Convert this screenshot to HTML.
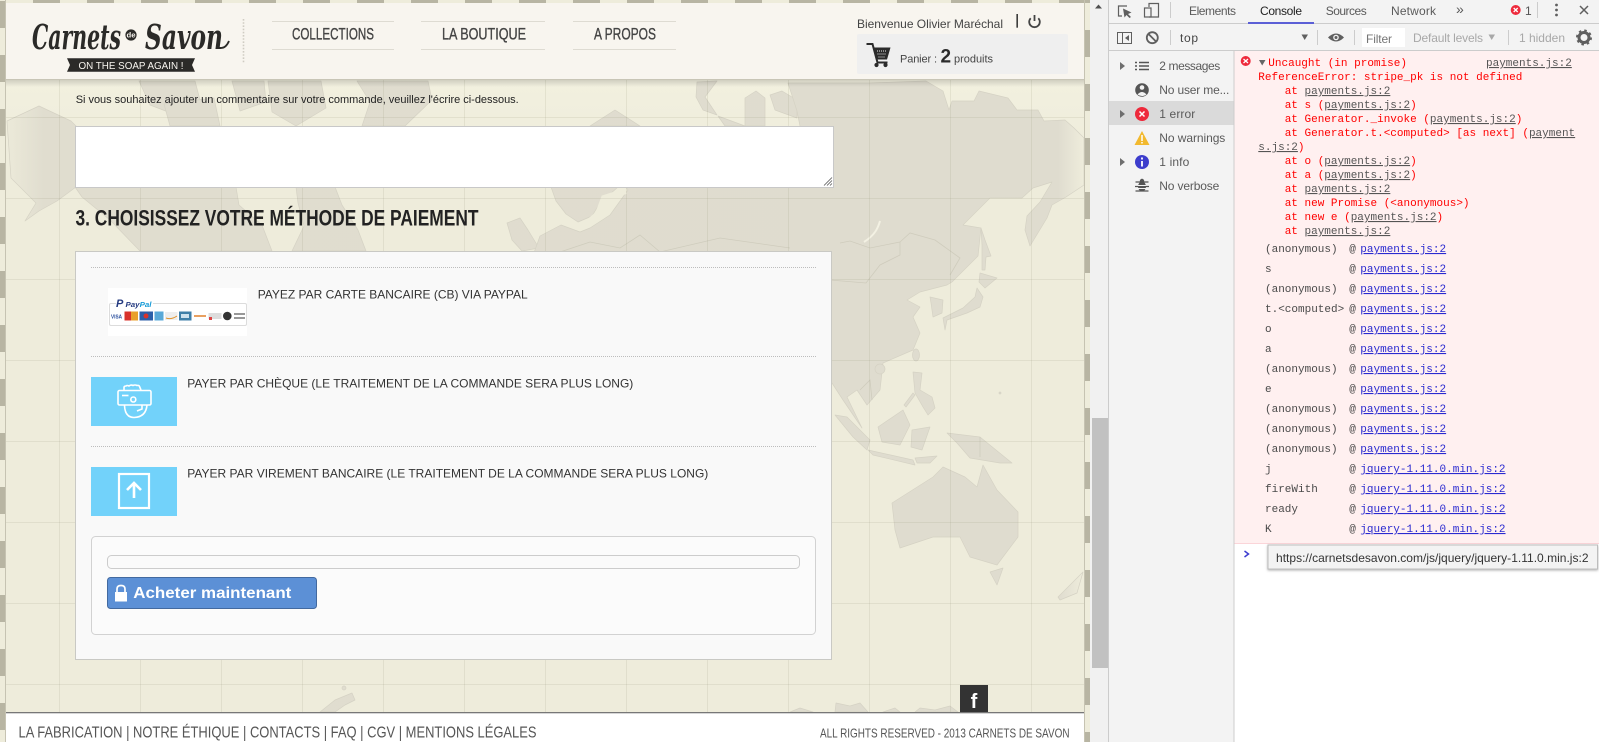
<!DOCTYPE html>
<html lang="fr"><head><meta charset="utf-8"><title>Carnets de Savon</title>
<style>
html,body{margin:0;padding:0;width:1599px;height:742px;overflow:hidden;background:#fff}
svg{display:block;position:absolute;left:0;top:0}
.s{font-family:"Liberation Sans",Arial,sans-serif}
.n{font-family:"Liberation Sans Narrow","Liberation Sans",sans-serif}
.m{font-family:"Liberation Mono",monospace;font-size:11px;white-space:pre}
.r{fill:#f00}
.u{text-decoration:underline;fill:#555}
.l{text-decoration:underline;fill:#2a2ad0}
.g{fill:#4a4a4a}
.t{font-family:"Liberation Sans",sans-serif;font-size:12px;fill:#5a5a5a}
.land{fill:url(#landfill);stroke:#d5d2c4;stroke-width:.7;stroke-linejoin:round}
</style></head><body>
<svg width="1599" height="742" viewBox="0 0 1599 742" xmlns="http://www.w3.org/2000/svg">
<defs>
<linearGradient id="landfill" gradientUnits="userSpaceOnUse" x1="0" y1="0" x2="1085" y2="0">
<stop offset="0" stop-color="#eeecdb"/><stop offset=".04" stop-color="#e0ddcf"/><stop offset=".975" stop-color="#dfdccf"/><stop offset=".998" stop-color="#eeecdb"/>
</linearGradient>
<linearGradient id="shad" x1="0" y1="0" x2="0" y2="1"><stop offset="0" stop-color="#000" stop-opacity=".14"/><stop offset="1" stop-color="#000" stop-opacity="0"/></linearGradient>
<linearGradient id="topl" x1="0" y1="0" x2="0" y2="1"><stop offset="0" stop-color="#f2f0df"/><stop offset="1" stop-color="#eeecdb"/></linearGradient>
<pattern id="pl" width="6" height="54" patternUnits="userSpaceOnUse" y="1"><rect width="6" height="54" fill="#eeecdb"/><rect width="6" height="27" fill="#b8b5a3"/></pattern>
<pattern id="pr" width="6" height="54" patternUnits="userSpaceOnUse" y="84"><rect width="6" height="54" fill="#eeecdb"/><rect width="6" height="27" fill="#b8b5a3"/></pattern>
<pattern id="pt" width="54" height="4" patternUnits="userSpaceOnUse" x="33"><rect width="54" height="4" fill="#eeecdb"/><rect width="27" height="4" fill="#b8b5a3"/></pattern>
<filter id="ts" x="-5%" y="-20%" width="110%" height="150%"><feDropShadow dx="0" dy="1" stdDeviation="1.2" flood-color="#000" flood-opacity=".3"/></filter>
</defs>

<!-- map background -->
<rect x="0" y="0" width="1090" height="742" fill="#eeecdb"/>
<rect x="6" y="80" width="1078" height="80" fill="url(#topl)"/>
<g class="land">
<path d="M7 121L39 106L71 121L76 126L76 187L57 201L39 211L25 221L36 203L11 178Z"/>
<path d="M75 187L236 187L239 205L262 225L272 251L140 251L110 220L82 197Z"/>
<path d="M296 187L335 187L342 205L358 230L366 251L292 251L304 226L298 203Z"/>
<path d="M139 81L195 81L200 100L176 115L150 105Z"/>
<path d="M164 104L214 98L220 126L170 126Z"/>
<path d="M232 81L264 81L266 102L240 111Z"/>
<path d="M268 81L321 81L326 108L296 126L272 112Z"/>
<path d="M357 81L428 81L432 100L405 126L362 126L370 102Z"/>
<path d="M507 223L520 218L528 230L539 248L522 251L512 240Z"/>
<path d="M590 126L615 110L640 126Z"/>
<path d="M697 82L717 81L705 97L717 115L703 110L696 97Z"/>
<path d="M745 98L756 91L765 98L765 126L745 126Z"/>
<path d="M770 95L782 91L797 100L797 118L775 110Z"/>
<path d="M718 116L745 126L725 126Z"/>
<!-- Eurasia -->
<path d="M788 83L869 83L926 81L943 91L949 110L952 101L974 101L979 91L1008 98L1017 110L1038 110L1044 121L1065 120L1074 128L1084 138L1084 185L1066 197L1052 205L1047 218L1030 246L1025 230L1027 216L1040 202L1052 182L1033 188L1022 198L990 198L963 225L981 228L978 256L952 282L947 285L920 292L907 300L920 307L913 317L920 333L913 350L883 363L880 390L867 405L857 390L847 397L862 428L843 400L832 383L500 383L530 264L540 236L561 225L580 232L590 228L610 215L628 190L626 187L800 187L800 126L797 111Z"/>
<path d="M551 187L618 187L600 203L592 216L578 222L566 214L556 201Z"/>
<path d="M981 228L985 240L991 256L986 257L985 270L982 270L982 245Z"/>
<path d="M980 273L997 278L985 288L979 282Z"/>
<path d="M977 288L983 297L980 307L967 313L947 320L945 330L943 318L963 308L975 297Z"/>
<path d="M930 297L943 300L942 313L933 317L931 303Z"/>
<ellipse cx="916" cy="355" rx="3.5" ry="6"/><circle cx="880" cy="369" r="5"/>
<path d="M913 372L922 373L920 390L932 397L935 408L928 415L923 407L915 393Z"/>
<path d="M904 405L913 393L915 395L906 407Z"/>
<path d="M878 427L903 410L910 425L900 445L882 442Z"/>
<path d="M912 430L930 427L922 450L911 447Z"/>
<path d="M835 415L847 417L870 440L867 450L853 437Z"/>
<path d="M868 450L913 460L915 465L873 455Z"/>
<path d="M915 458L937 456L930 463L917 463Z"/>
<path d="M947 433L980 437L1012 463L1000 463L970 458L957 443Z"/>
<path d="M892 503L933 477L943 467L965 477L977 487L983 465L997 490L1018 512L1018 537L997 565L970 557L960 537L933 537L900 548L895 530Z"/>
<path d="M990 572L1003 568L997 585Z"/>
<path d="M1058 597L1083 572L1077 593L1060 600Z"/>
<path d="M320 712L335 700L352 693L355 700L345 705L335 712Z"/>
<path d="M790 712L800 708L813 712ZM835 712L836 703L850 706L860 703L868 712ZM883 712L895 708L900 712ZM915 712L920 708L935 710L950 706L958 712Z"/>
<circle cx="344" cy="688" r="2"/><circle cx="1000" cy="393" r="1"/>
</g>
<g fill="none" stroke="#cfccbd" stroke-width=".8">
<path d="M840 243L850 241L870 248L900 242L900 255L880 265L866 283L830 280M900 242L910 233L935 240L960 258L950 275"/>
<path d="M560 252L590 242L620 248L640 235L660 252L720 238L790 248"/>
<path d="M860 390L870 380L872 400"/><path d="M980 437L980 457"/>
</g>
<path d="M864 242C875 235 878 228 880 221" fill="none" stroke="#f3f1e3" stroke-width="2"/>
<path d="M584 226L598 214L604 198L626 191" fill="none" stroke="#eeecdb" stroke-width="6"/>
<!-- grid -->
<g stroke="#8f8c6e" stroke-opacity=".14" stroke-width="1">
<path d="M6 117.5H1084M6 198.5H1084M6 279.5H1084M6 360.5H1084M6 441.5H1084M6 522.5H1084M6 603.5H1084M6 684.5H1084"/>
<path d="M59.5 80V712M140.5 80V712M221.5 80V712M302.5 80V712M383.5 80V712M464.5 80V712M545.5 80V712M626.5 80V712M707.5 80V712M788.5 80V712M869.5 80V712M950.5 80V712M1031.5 80V712"/>
</g>

<!-- page stripes -->
<rect x="0" y="0" width="5" height="742" fill="url(#pl)"/>
<rect x="5" y="0" width="1" height="742" fill="#c6c3b2"/>
<rect x="1085" y="0" width="5" height="742" fill="url(#pr)"/>
<rect x="1084" y="0" width="1" height="742" fill="#c6c3b2"/>
<rect x="6" y="0" width="1078" height="3" fill="url(#pt)"/>

<!-- header -->
<rect x="6" y="80" width="1078" height="7" fill="url(#shad)"/>
<rect x="6" y="3" width="1078" height="76" fill="#f8f5ef"/>
<rect x="6" y="79" width="1078" height="1" fill="#c8c5b6"/>
<text x="32" y="49" font-family="DejaVu Serif,serif" font-style="italic" font-weight="700" font-size="35" fill="#2b2a28" textLength="89" lengthAdjust="spacingAndGlyphs">Carnets</text>
<circle cx="131" cy="35" r="5.6" fill="#2b2a28"/>
<text x="126.500" y="37.500" class="s" font-size="7" font-weight="700" fill="#f8f5ef" textLength="9" lengthAdjust="spacingAndGlyphs">de</text>
<text x="145" y="49" font-family="DejaVu Serif,serif" font-style="italic" font-weight="700" font-size="35" fill="#2b2a28" textLength="78" lengthAdjust="spacingAndGlyphs">Savon</text>
<path d="M221 48Q226 48 229 41" fill="none" stroke="#2b2a28" stroke-width="1.800"/>
<path d="M67 58.300H195L192 65L195 71.700H67L70 65Z" fill="#2b2a28"/>
<text x="78.500" y="69" class="s" font-size="10.500" fill="#f8f5ef" textLength="105" lengthAdjust="spacingAndGlyphs">ON THE SOAP AGAIN !</text>
<path d="M243.500 19V63" stroke="#cfccc2" stroke-width="1.600" stroke-dasharray="1.600 1.600"/>
<g stroke="#dedbd2" stroke-width="1">
<path d="M272 21.500H394M272 49.500H394M421 21.500H545M421 49.500H545M573 21.500H676M573 49.500H676"/></g>
<g class="n" font-size="17" fill="#444" stroke="#444" stroke-width=".35">
<text x="292" y="39.500" textLength="82" lengthAdjust="spacingAndGlyphs">COLLECTIONS</text>
<text x="442" y="39.500" textLength="84" lengthAdjust="spacingAndGlyphs">LA BOUTIQUE</text>
<text x="594" y="39.500" textLength="62" lengthAdjust="spacingAndGlyphs">A PROPOS</text>
</g>
<text x="857" y="28" class="s" font-size="12" fill="#444" textLength="146">Bienvenue Olivier Maréchal</text>
<rect x="1016.500" y="14" width="1.300" height="13.700" fill="#111"/>
<path d="M1030.700 18.200A5.300 5.300 0 1 0 1038.300 18.200M1034.500 15V21" fill="none" stroke="#444" stroke-width="1.800"/>
<rect x="857" y="34" width="211" height="40" rx="2" fill="#efefef"/>
<g transform="translate(0,-2)">
<path d="M866.500 46H872.500L877.500 64.500H887.500" fill="none" stroke="#2b2b2b" stroke-width="2"/>
<path d="M873.500 49.500H890.500L887 61.500H876.500Z" fill="#2b2b2b"/>
<path d="M877 53H887M877.500 56H886M878.500 59H885" stroke="#efefef" stroke-width="1" stroke-dasharray="1 1"/>
<circle cx="876.500" cy="67" r="2.100" fill="#2b2b2b"/><circle cx="885.500" cy="67" r="2.100" fill="#2b2b2b"/>
</g>
<text x="900" y="62.500" class="s" font-size="11" fill="#444" textLength="37">Panier :</text>
<text x="940.500" y="62.500" class="s" font-size="19" font-weight="700" fill="#2b2b2b">2</text>
<text x="954" y="62.500" class="s" font-size="11" fill="#444" textLength="39">produits</text>

<!-- content -->
<text x="75.700" y="103" class="s" font-size="11" fill="#222" textLength="443">Si vous souhaitez ajouter un commentaire sur votre commande, veuillez l'écrire ci-dessous.</text>
<rect x="75.500" y="126.500" width="758" height="61" fill="#fff" stroke="#c8c8c8"/>
<path d="M824 185.500L832 177.500M827 185.500L832 180.500M830 185.500L832 183.500" stroke="#555" stroke-width=".8"/>
<text x="75.500" y="225.500" class="n" font-size="22.500" font-weight="700" fill="#222" textLength="403" lengthAdjust="spacingAndGlyphs">3. CHOISISSEZ VOTRE MÉTHODE DE PAIEMENT</text>

<rect x="75.500" y="251.500" width="756" height="408" fill="#f9f9f9" stroke="#c9c9c4"/>
<path d="M91 267.500H816M91 356.500H816M91 446.500H816" stroke="#bdbdbd" stroke-width="1" stroke-dasharray="1 1"/>

<!-- paypal -->
<rect x="108" y="288" width="139" height="48" fill="#fff"/>
<path d="M116 303.500H111Q109.500 303.500 109.500 305V324Q109.500 325.500 111 325.500H245Q246.500 325.500 246.500 324V305Q246.500 303.500 245 303.500H153" fill="none" stroke="#dcdcdc"/>
<text x="116" y="307" font-family="Liberation Sans,sans-serif" font-style="italic" font-weight="700" font-size="11" fill="#253b80">P</text>
<text x="125.500" y="307" font-family="Liberation Sans,sans-serif" font-style="italic" font-weight="700" font-size="7.500" fill="#253b80" textLength="26" lengthAdjust="spacingAndGlyphs">Pay<tspan fill="#179bd7">Pal</tspan></text>
<text x="111" y="318.500" class="s" font-size="5.500" font-weight="700" fill="#2a4f9e" textLength="11" lengthAdjust="spacingAndGlyphs">VISA</text>
<rect x="124.500" y="311.500" width="13.500" height="9" fill="#d9322b"/><rect x="131" y="311.500" width="7" height="9" fill="#e8a02c"/>
<rect x="139.500" y="311.500" width="13.500" height="9" fill="#2c5fa8"/><circle cx="146" cy="316" r="2.500" fill="#d9322b"/>
<rect x="154.500" y="311.500" width="9" height="9" fill="#5aa9d8"/>
<rect x="165" y="312" width="12.500" height="8" fill="#eee"/><path d="M166 318Q171 320 177 316" stroke="#e0932c" fill="none"/>
<rect x="179" y="311.500" width="12.500" height="9" fill="#3f7fa8"/><rect x="181" y="314" width="8" height="4" fill="#cfe2ee"/>
<path d="M194 316H206" stroke="#e0802c" stroke-width="1.500"/>
<rect x="208.500" y="313" width="13" height="6" fill="#ddd"/><rect x="209" y="317" width="3" height="3" fill="#d44"/>
<circle cx="227.300" cy="316" r="4.300" fill="#333"/>
<path d="M234 314H245M234 318H245" stroke="#777" stroke-width="1.500"/>
<g class="s" font-size="12" fill="#333">
<text x="257.700" y="298.500" textLength="270">PAYEZ PAR CARTE BANCAIRE (CB) VIA PAYPAL</text>
<text x="187.300" y="387.500" textLength="446">PAYER PAR CHÈQUE (LE TRAITEMENT DE LA COMMANDE SERA PLUS LONG)</text>
<text x="187.300" y="477.500" textLength="521">PAYER PAR VIREMENT BANCAIRE (LE TRAITEMENT DE LA COMMANDE SERA PLUS LONG)</text>
</g>

<!-- cheque -->
<rect x="91" y="377" width="86" height="49" fill="#72d2fa"/>
<g fill="none" stroke="#fff" stroke-width="1.600">
<path d="M124 390V387.500Q124 386 126 386Q127 385 129 386Q131 384.500 133 385.500Q135 384.500 137 385.500Q139 385 139.500 386.500L141 390"/>
<rect x="118" y="390.500" width="33" height="14.500" rx="1.500"/>
<circle cx="133.300" cy="399.500" r="2.500"/>
<path d="M122 395.500H128.500"/>
<path d="M124.500 405.500Q125 417.500 134 417.500Q146 417 147 405M142 405V409L137 411"/>
</g>
<!-- virement -->
<rect x="91" y="467" width="86" height="49" fill="#72d2fa"/>
<g fill="none" stroke="#fff">
<rect x="119" y="474" width="30" height="34" stroke-width="2.200"/>
<path d="M134 498V483.500M127 490L134 483L141 490" stroke-width="2.600"/>
</g>

<!-- inner box -->
<rect x="91.500" y="536.500" width="724" height="98" rx="4" fill="#fbfbfb" stroke="#d2d2d2"/>
<rect x="107.500" y="555.500" width="692" height="13" rx="4" fill="#fafafa" stroke="#cccccc"/>
<rect x="107.500" y="577.500" width="209" height="31" rx="3" fill="#5c90d6" stroke="#42699f"/>
<path d="M117 592V589Q117 585.500 121 585.500Q125 585.500 125 589V592" fill="none" stroke="#fff" stroke-width="1.700"/>
<rect x="115" y="592" width="12" height="9.500" fill="#fff"/>
<text x="133.300" y="598" class="s" font-size="16" font-weight="700" fill="#fff" textLength="158" lengthAdjust="spacingAndGlyphs">Acheter maintenant</text>

<!-- footer -->
<rect x="960" y="685" width="28" height="27" fill="#333"/>
<text x="974" y="708" text-anchor="middle" class="s" font-size="20" font-weight="700" fill="#fff">f</text>
<rect x="6" y="713" width="1078" height="29" fill="#fff"/>
<rect x="6" y="712" width="1078" height="1.300" fill="#777"/>
<text x="18.500" y="737.500" class="n" font-size="16" fill="#555" textLength="518" lengthAdjust="spacingAndGlyphs">LA FABRICATION | NOTRE ÉTHIQUE | CONTACTS | FAQ | CGV | MENTIONS LÉGALES</text>
<text x="820" y="737.500" class="n" font-size="13" fill="#555" textLength="249.500" lengthAdjust="spacingAndGlyphs">ALL RIGHTS RESERVED - 2013 CARNETS DE SAVON</text>

<!-- scrollbar -->
<rect x="1090" y="0" width="18" height="742" fill="#f1f1f1"/>
<rect x="1092" y="418" width="16" height="250" fill="#c1c1c1"/>
<path d="M1095 8.500L1098.500 4.500L1102 8.500Z" fill="#505050"/>

<!-- devtools -->
<rect x="1108" y="0" width="491" height="742" fill="#fff"/>
<rect x="1108" y="0" width="491" height="51" fill="#f3f3f3"/>
<rect x="1108" y="0" width="1" height="742" fill="#ccc"/>
<path d="M1108 23.500H1599M1108 50.500H1599" stroke="#cccccc"/>
<!-- top bar icons -->
<path d="M1127 6H1118.500V16H1122" fill="none" stroke="#5f5f5f" stroke-width="1.200"/>
<path d="M1123 8.500L1131.500 12.500L1128 14L1131 17L1129.500 18L1126.500 15L1124.500 17.500Z" fill="#5f5f5f"/>
<path d="M1149 7V3.500H1158.500V17H1149" fill="none" stroke="#5f5f5f" stroke-width="1.200"/>
<rect x="1144.500" y="8" width="6.500" height="9" fill="none" stroke="#5f5f5f" stroke-width="1.200"/>
<path d="M1170.500 2V18M1537.500 2V18M1170.500 30V45M1317.500 30V45M1354.500 30V45M1508.500 30V45" stroke="#ccc"/>
<g class="s" font-size="12" fill="#5a5a5a">
<text x="1189" y="15" textLength="47">Elements</text>
<text x="1260" y="15" textLength="42" fill="#222">Console</text>
<text x="1325.700" y="15" textLength="41">Sources</text>
<text x="1391" y="15" textLength="45">Network</text>
<text x="1456" y="14" font-size="14">»</text>
</g>
<rect x="1248" y="22" width="66" height="2" fill="#5b5fd6"/>
<circle cx="1515.700" cy="10" r="5" fill="#ee2a3c"/>
<path d="M1513.700 8L1517.700 12M1517.700 8L1513.700 12" stroke="#fff" stroke-width="1.300"/>
<text x="1525" y="15" class="s" font-size="12" fill="#555">1</text>
<g fill="#5f5f5f"><circle cx="1556.500" cy="5" r="1.400"/><circle cx="1556.500" cy="10" r="1.400"/><circle cx="1556.500" cy="15" r="1.400"/></g>
<path d="M1580 6L1588 14M1588 6L1580 14" stroke="#5f5f5f" stroke-width="1.500"/>
<!-- second toolbar -->
<rect x="1117.500" y="32.500" width="14" height="11" fill="none" stroke="#5f5f5f"/>
<path d="M1122.500 32.500V43.500" stroke="#5f5f5f"/><path d="M1129 35L1125 38L1129 41Z" fill="#5f5f5f"/>
<circle cx="1152.300" cy="37.700" r="5.500" fill="none" stroke="#5f5f5f" stroke-width="1.800"/>
<path d="M1148.500 34L1156 41.500" stroke="#5f5f5f" stroke-width="1.800"/>
<text x="1180" y="42" class="s" font-size="12" fill="#444" textLength="18">top</text>
<path d="M1301.500 34.500H1308L1304.700 40Z" fill="#5f5f5f"/>
<path d="M1328 37.500Q1336 29.500 1344 37.500Q1336 45.500 1328 37.500Z" fill="#5f5f5f"/>
<circle cx="1336" cy="37.500" r="2.800" fill="#f3f3f3"/><circle cx="1336" cy="37.500" r="1.500" fill="#5f5f5f"/>
<rect x="1362" y="28" width="43" height="19" fill="#fff"/>
<text x="1366" y="43" class="s" font-size="12" fill="#757575" textLength="26">Filter</text>
<text x="1413" y="42" class="s" font-size="12" fill="#a8a8a8" textLength="70">Default levels</text>
<path d="M1488.500 34.500H1495L1491.700 40Z" fill="#a8a8a8"/>
<text x="1519" y="42" class="s" font-size="12" fill="#a8a8a8" textLength="46">1 hidden</text>
<circle cx="1584" cy="37.500" r="5" fill="none" stroke="#5f5f5f" stroke-width="3"/>
<circle cx="1584" cy="37.500" r="7" fill="none" stroke="#5f5f5f" stroke-width="2" stroke-dasharray="2.500 3"/>

<!-- sidebar -->
<rect x="1109" y="51" width="124.500" height="691" fill="#f3f3f3"/>
<rect x="1233.500" y="51" width="1" height="691" fill="#ccc"/>
<rect x="1109" y="101" width="124.500" height="24" fill="#dadada"/>
<g fill="#6e6e6e"><path d="M1120 62L1125 66L1120 70Z"/><path d="M1120 110L1125 114L1120 118Z"/><path d="M1120 158L1125 162L1120 166Z"/></g>
<path d="M1139 62.500H1149M1139 66H1149M1139 69.500H1149M1135 62.500H1137M1135 66H1137M1135 69.500H1137" stroke="#555" stroke-width="1.500"/>
<circle cx="1142" cy="90" r="6.800" fill="#555"/><circle cx="1142" cy="87.500" r="2.300" fill="#f3f3f3"/>
<path d="M1137.500 94.500Q1142 89.500 1146.500 94.500Q1142 97.500 1137.500 94.500Z" fill="#f3f3f3"/>
<circle cx="1142" cy="114" r="7" fill="#ee2a3c"/><path d="M1139.500 111.500L1144.500 116.500M1144.500 111.500L1139.500 116.500" stroke="#fff" stroke-width="1.500"/>
<path d="M1142 131L1149.500 145H1134.500Z" fill="#f2b92e"/><path d="M1142 135V141M1142 142V143.500" stroke="#fff" stroke-width="1.500"/>
<circle cx="1142" cy="162" r="7" fill="#3d3dcc"/><path d="M1142 161V166.500M1142 157.500V159.500" stroke="#fff" stroke-width="1.800"/>
<ellipse cx="1142" cy="186.500" rx="4" ry="5" fill="#555"/><circle cx="1142" cy="181" r="2.200" fill="#555"/>
<path d="M1135.500 182L1148.500 182M1135 186.500H1149M1135.500 191L1148.500 191" stroke="#555" stroke-width="1.300"/>
<path d="M1138 185.500H1146M1138 188.500H1146" stroke="#f3f3f3"/>
<g class="t">
<text x="1159.300" y="70" textLength="61">2 messages</text>
<text x="1159.300" y="94" textLength="70">No user me...</text>
<text x="1159.300" y="118" textLength="36">1 error</text>
<text x="1159.300" y="142" textLength="66">No warnings</text>
<text x="1159.300" y="166" textLength="30">1 info</text>
<text x="1159.300" y="190" textLength="60">No verbose</text>
</g>

<!-- console -->
<rect x="1234.500" y="51" width="365" height="492.500" fill="#fff0f0"/>
<rect x="1234.500" y="543" width="365" height="1" fill="#fbd5d9"/>
<circle cx="1245.700" cy="61" r="5" fill="#ee2a3c"/><path d="M1243.500 59L1248 63M1248 59L1243.500 63" stroke="#fff" stroke-width="1.300"/>
<path d="M1259 60H1265.500L1262.200 65.500Z" fill="#666"/>
<text x="1268.300" y="66" class="m r">Uncaught (in promise)</text>
<text x="1486" y="66" class="m u">payments.js:2</text>
<text x="1258.300" y="80" class="m r">ReferenceError: stripe_pk is not defined</text>
<g class="m r">
<text x="1284.700" y="94">at <tspan class="u">payments.js:2</tspan></text>
<text x="1284.700" y="108">at s (<tspan class="u">payments.js:2</tspan>)</text>
<text x="1284.700" y="122">at Generator._invoke (<tspan class="u">payments.js:2</tspan>)</text>
<text x="1284.700" y="136">at Generator.t.&lt;computed&gt; [as next] (<tspan class="u">payment</tspan></text>
<text x="1258.300" y="150"><tspan class="u">s.js:2</tspan>)</text>
<text x="1284.700" y="164">at o (<tspan class="u">payments.js:2</tspan>)</text>
<text x="1284.700" y="178">at a (<tspan class="u">payments.js:2</tspan>)</text>
<text x="1284.700" y="192">at <tspan class="u">payments.js:2</tspan></text>
<text x="1284.700" y="206">at new Promise (&lt;anonymous&gt;)</text>
<text x="1284.700" y="220">at new e (<tspan class="u">payments.js:2</tspan>)</text>
<text x="1284.700" y="234">at <tspan class="u">payments.js:2</tspan></text>
</g>
<g class="m g">
<text x="1265" y="252">(anonymous)</text><text x="1349.300" y="252">@</text><text x="1360.300" y="252" class="m l">payments.js:2</text>
<text x="1265" y="272">s</text><text x="1349.300" y="272">@</text><text x="1360.300" y="272" class="m l">payments.js:2</text>
<text x="1265" y="292">(anonymous)</text><text x="1349.300" y="292">@</text><text x="1360.300" y="292" class="m l">payments.js:2</text>
<text x="1265" y="312">t.&lt;computed&gt;</text><text x="1349.300" y="312">@</text><text x="1360.300" y="312" class="m l">payments.js:2</text>
<text x="1265" y="332">o</text><text x="1349.300" y="332">@</text><text x="1360.300" y="332" class="m l">payments.js:2</text>
<text x="1265" y="352">a</text><text x="1349.300" y="352">@</text><text x="1360.300" y="352" class="m l">payments.js:2</text>
<text x="1265" y="372">(anonymous)</text><text x="1349.300" y="372">@</text><text x="1360.300" y="372" class="m l">payments.js:2</text>
<text x="1265" y="392">e</text><text x="1349.300" y="392">@</text><text x="1360.300" y="392" class="m l">payments.js:2</text>
<text x="1265" y="412">(anonymous)</text><text x="1349.300" y="412">@</text><text x="1360.300" y="412" class="m l">payments.js:2</text>
<text x="1265" y="432">(anonymous)</text><text x="1349.300" y="432">@</text><text x="1360.300" y="432" class="m l">payments.js:2</text>
<text x="1265" y="452">(anonymous)</text><text x="1349.300" y="452">@</text><text x="1360.300" y="452" class="m l">payments.js:2</text>
<text x="1265" y="472">j</text><text x="1349.300" y="472">@</text><text x="1360.300" y="472" class="m l">jquery-1.11.0.min.js:2</text>
<text x="1265" y="492">fireWith</text><text x="1349.300" y="492">@</text><text x="1360.300" y="492" class="m l">jquery-1.11.0.min.js:2</text>
<text x="1265" y="512">ready</text><text x="1349.300" y="512">@</text><text x="1360.300" y="512" class="m l">jquery-1.11.0.min.js:2</text>
<text x="1265" y="532">K</text><text x="1349.300" y="532">@</text><text x="1360.300" y="532" class="m l">jquery-1.11.0.min.js:2</text>
</g>
<path d="M1244.500 551L1248.500 554L1244.500 557" fill="none" stroke="#3d3dd0" stroke-width="1.500"/>
<rect x="1268" y="545" width="329.500" height="24" fill="#f3f3f3" stroke="#bdbdbd" filter="url(#ts)"/>
<text x="1276" y="562" class="s" font-size="12" fill="#333" textLength="312.500">https://carnetsdesavon.com/js/jquery/jquery-1.11.0.min.js:2</text>
</svg>
</body></html>
